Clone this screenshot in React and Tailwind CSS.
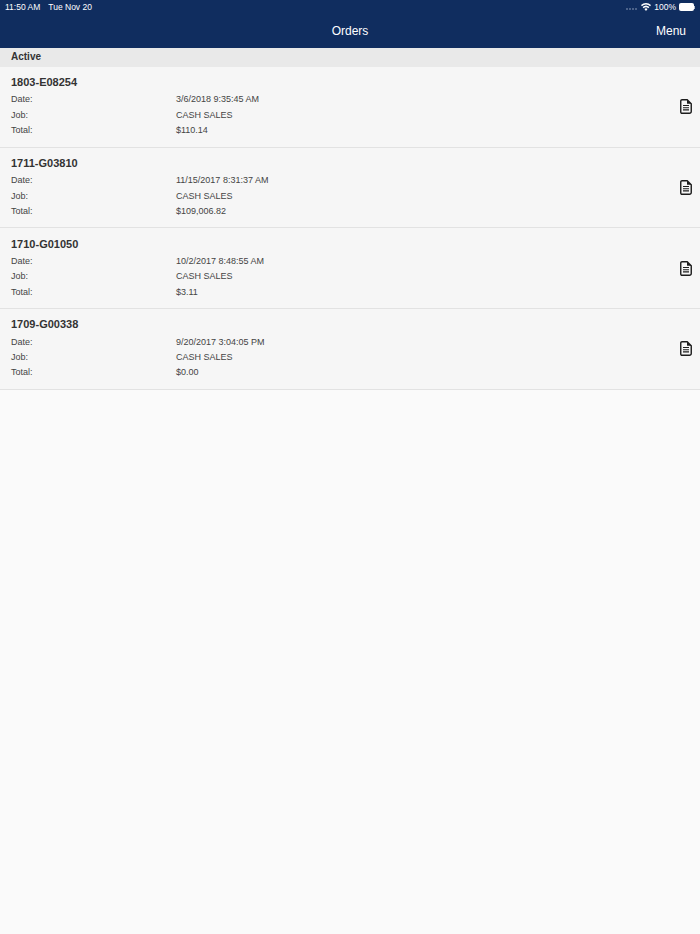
const orders = [
  { id: "1803-E08254", date: "3/6/2018 9:35:45 AM", job: "CASH SALES", total: "$110.14" },
  { id: "1711-G03810", date: "11/15/2017 8:31:37 AM", job: "CASH SALES", total: "$109,006.82" },
  { id: "1710-G01050", date: "10/2/2017 8:48:55 AM", job: "CASH SALES", total: "$3.11" },
  { id: "1709-G00338", date: "9/20/2017 3:04:05 PM", job: "CASH SALES", total: "$0.00" },
];

function DocIcon() {
  return (
    <svg width="12" height="15" viewBox="0 0 12 15" fill="none" className="shrink-0">
      <path d="M2 .75h5.2L11.25 4.8V12.5a1.75 1.75 0 0 1-1.75 1.75h-7.5A1.25 1.25 0 0 1 .75 13V2A1.25 1.25 0 0 1 2 .75Z" stroke="#1c1c1c" strokeWidth="1.4" fill="#f6f6f6" />
      <path d="M7 .8V4.8h4.2Z" fill="#1c1c1c" />
      <path d="M3 6.5h6M3 8.7h6M3 10.9h6" stroke="#1c1c1c" strokeWidth="1.1" />
    </svg>
  );
}

function Row({ label, value }) {
  return (
    <div className="flex h-[15.4px] items-center text-[9px] leading-none text-[#444444]">
      <span className="w-[165px] shrink-0">{label}</span>
      <span>{value}</span>
    </div>
  );
}

export default function App() {
  return (
    <div className="flex min-h-[934px] flex-col bg-[#fafafa] font-['Liberation_Sans',Arial,sans-serif]">
      <header className="h-12 shrink-0 bg-[#102d5f] text-white">
        <div className="flex h-[14px] items-center justify-between pl-[5px] pr-[5px] text-[8.5px] leading-none">
          <div className="flex gap-[8px]">
            <span>11:50 AM</span>
            <span>Tue Nov 20</span>
          </div>
          <div className="flex items-center gap-[3px]">
            <div className="mr-[1px] mt-[3px] flex gap-[1px]">
              <div className="size-[2px] rounded-full bg-[#5f7599]" />
              <div className="size-[2px] rounded-full bg-[#5f7599]" />
              <div className="size-[2px] rounded-full bg-[#5f7599]" />
              <div className="size-[2px] rounded-full bg-[#5f7599]" />
            </div>
            <svg width="10" height="8" viewBox="0 0 10 8" fill="white">
              <path d="M5 8 3.4 6.1a2.3 2.3 0 0 1 3.2 0ZM2.6 5.2 1.6 4a5 5 0 0 1 6.8 0L7.4 5.2a3.6 3.6 0 0 0-4.8 0ZM.9 3.2 0 2.1a7.3 7.3 0 0 1 10 0L9.1 3.2a6 6 0 0 0-8.2 0Z" />
            </svg>
            <span>100%</span>
            <div className="flex items-center">
              <div className="h-[8px] w-[15px] rounded-[2px] border border-white/70 bg-white" />
              <div className="h-[3px] w-[1px] bg-white/70" />
            </div>
          </div>
        </div>
        <div className="relative flex h-[34px] items-center justify-center">
          <span className="text-[12px] leading-none">Orders</span>
          <span className="absolute right-[14px] text-[12px] leading-none">Menu</span>
        </div>
      </header>
      <div className="flex h-[19px] shrink-0 items-center bg-[#e9e9e9] pb-[2px] pl-[11px] text-[10px] font-bold leading-none text-[#333333]">
        Active
      </div>
      {orders.map((o) => (
        <div key={o.id} className="flex h-[80.7px] shrink-0 items-center border-b border-[#e2e2e2] bg-[#f6f6f6] pl-[11px] pr-2">
          <div className="flex-1">
            <div className="mb-[2px] text-[11px] font-bold leading-[15px] text-[#333333]">{o.id}</div>
            <Row label="Date:" value={o.date} />
            <Row label="Job:" value={o.job} />
            <Row label="Total:" value={o.total} />
          </div>
          <DocIcon />
        </div>
      ))}
    </div>
  );
}
